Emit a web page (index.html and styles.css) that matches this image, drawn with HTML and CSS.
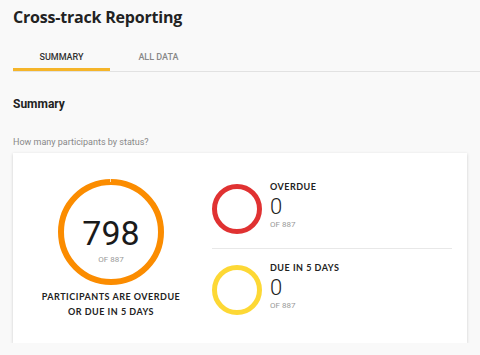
FILE: index.html
```html
<!DOCTYPE html>
<html lang="en">
<head>
    <meta charset="UTF-8">
    <meta name="viewport" content="width=device-width, initial-scale=1.0">
    <title>Cross-track Reporting</title>
    <link rel="stylesheet" href="styles.css">
</head>
<body>
    <div id="page">
        <h1 class="title">Cross-track Reporting</h1>
        <div class="tabs">
            <div class="tab active">SUMMARY</div>
            <div class="tab">ALL DATA</div>
        </div>

        <h2 class="section-title">Summary</h2>
        <p class="question">How many participants by status?</p>

        <div class="card">
            <div class="total">
                <div class="ring big">
                    <div class="big-num">798</div>
                    <div class="of">OF 887</div>
                </div>
                <div class="total-label">PARTICIPANTS ARE OVERDUE<br>OR DUE IN 5 DAYS</div>
            </div>
            <div class="statuses">
                <div class="status-row">
                    <div class="ring small red"></div>
                    <div class="status-text">
                        <div class="status-label">OVERDUE</div>
                        <div class="small-num">0</div>
                        <div class="of">OF 887</div>
                    </div>
                </div>
                <div class="status-row">
                    <div class="ring small yellow"></div>
                    <div class="status-text">
                        <div class="status-label">DUE IN 5 DAYS</div>
                        <div class="small-num">0</div>
                        <div class="of">OF 887</div>
                    </div>
                </div>
            </div>
        </div>
    </div>
</body>
</html>
```

FILE: styles.css
```css
body {
    margin: 0;
    background-color: #f9f9f9;
    font-family: Roboto, Arial, sans-serif;
    color: #222;
}

#page {
    padding: 5px 13px 0;
}

.title {
    margin: 0;
    font-family: "Open Sans", sans-serif;
    font-size: 16px;
    font-weight: 700;
    line-height: 24px;
    letter-spacing: -0.2px;
    color: #222;
}

.tabs {
    display: flex;
    margin: 15px -13px 0 0;
    border-bottom: 1px solid #e2e2e2;
}

.tab {
    width: 97px;
    padding: 7px 0 5px;
    text-align: center;
    font-size: 9px;
    font-weight: 500;
    line-height: 12px;
    color: #888;
    border-bottom: 3px solid transparent;
}

.tab.active {
    color: #333;
    border-bottom-color: #f5b52a;
}

.section-title {
    margin: 23px 0 0;
    font-size: 12px;
    font-weight: 700;
    line-height: 18px;
    color: #222;
}

.question {
    margin: 22px 0 0;
    font-size: 9px;
    line-height: 14px;
    color: #888;
}

.card {
    display: flex;
    align-items: center;
    margin-top: 4px;
    padding: 26px 15px 24px;
    background-color: #fff;
    box-shadow: 0 1px 3px rgba(0, 0, 0, 0.18);
}

.total {
    width: 166px;
    display: flex;
    flex-direction: column;
    align-items: center;
}

.ring {
    box-sizing: border-box;
    border-radius: 50%;
    border-style: solid;
}

.ring.big {
    position: relative;
    width: 106px;
    height: 106px;
    border-width: 6px;
    border-color: #fb8c00;
    display: flex;
    flex-direction: column;
    align-items: center;
    justify-content: center;
    padding-top: 15px;
}

/* little seam where the arc starts */
.ring.big::after {
    content: "";
    position: absolute;
    top: -6px;
    left: 46px;
    width: 1px;
    height: 3px;
    background-color: rgba(255, 255, 255, 0.7);
}

.big-num {
    font-size: 34px;
    font-weight: 400;
    line-height: 36px;
    color: #1a1a1a;
}

.of {
    margin-top: 4px;
    font-size: 8px;
    line-height: 10px;
    color: #999;
}

.total-label {
    margin-top: 4px;
    text-align: center;
    font-family: Lato, sans-serif;
    font-size: 9px;
    font-weight: 700;
    line-height: 15px;
    letter-spacing: 0.5px;
    color: #222;
}

.statuses {
    flex: 1;
    margin-left: 18px;
}

.status-row {
    display: flex;
    align-items: flex-start;
}

.status-row:first-child {
    padding-bottom: 14px;
    border-bottom: 1px solid #e8e8e8;
}

.status-row + .status-row {
    padding-top: 16px;
}

.ring.small {
    width: 50px;
    height: 50px;
    border-width: 5px;
}

.ring.red {
    border-color: #e03232;
}

.ring.yellow {
    border-color: #fdd835;
}

.status-text {
    margin: -3px 0 0 8px;
}

.status-label {
    font-family: Lato, sans-serif;
    font-size: 9px;
    font-weight: 700;
    line-height: 12px;
    letter-spacing: 0.5px;
    color: #222;
}

.small-num {
    margin-top: 3px;
    font-size: 22px;
    font-weight: 300;
    line-height: 22px;
    color: #222;
}

.status-text .of {
    margin-top: 2px;
}
```
